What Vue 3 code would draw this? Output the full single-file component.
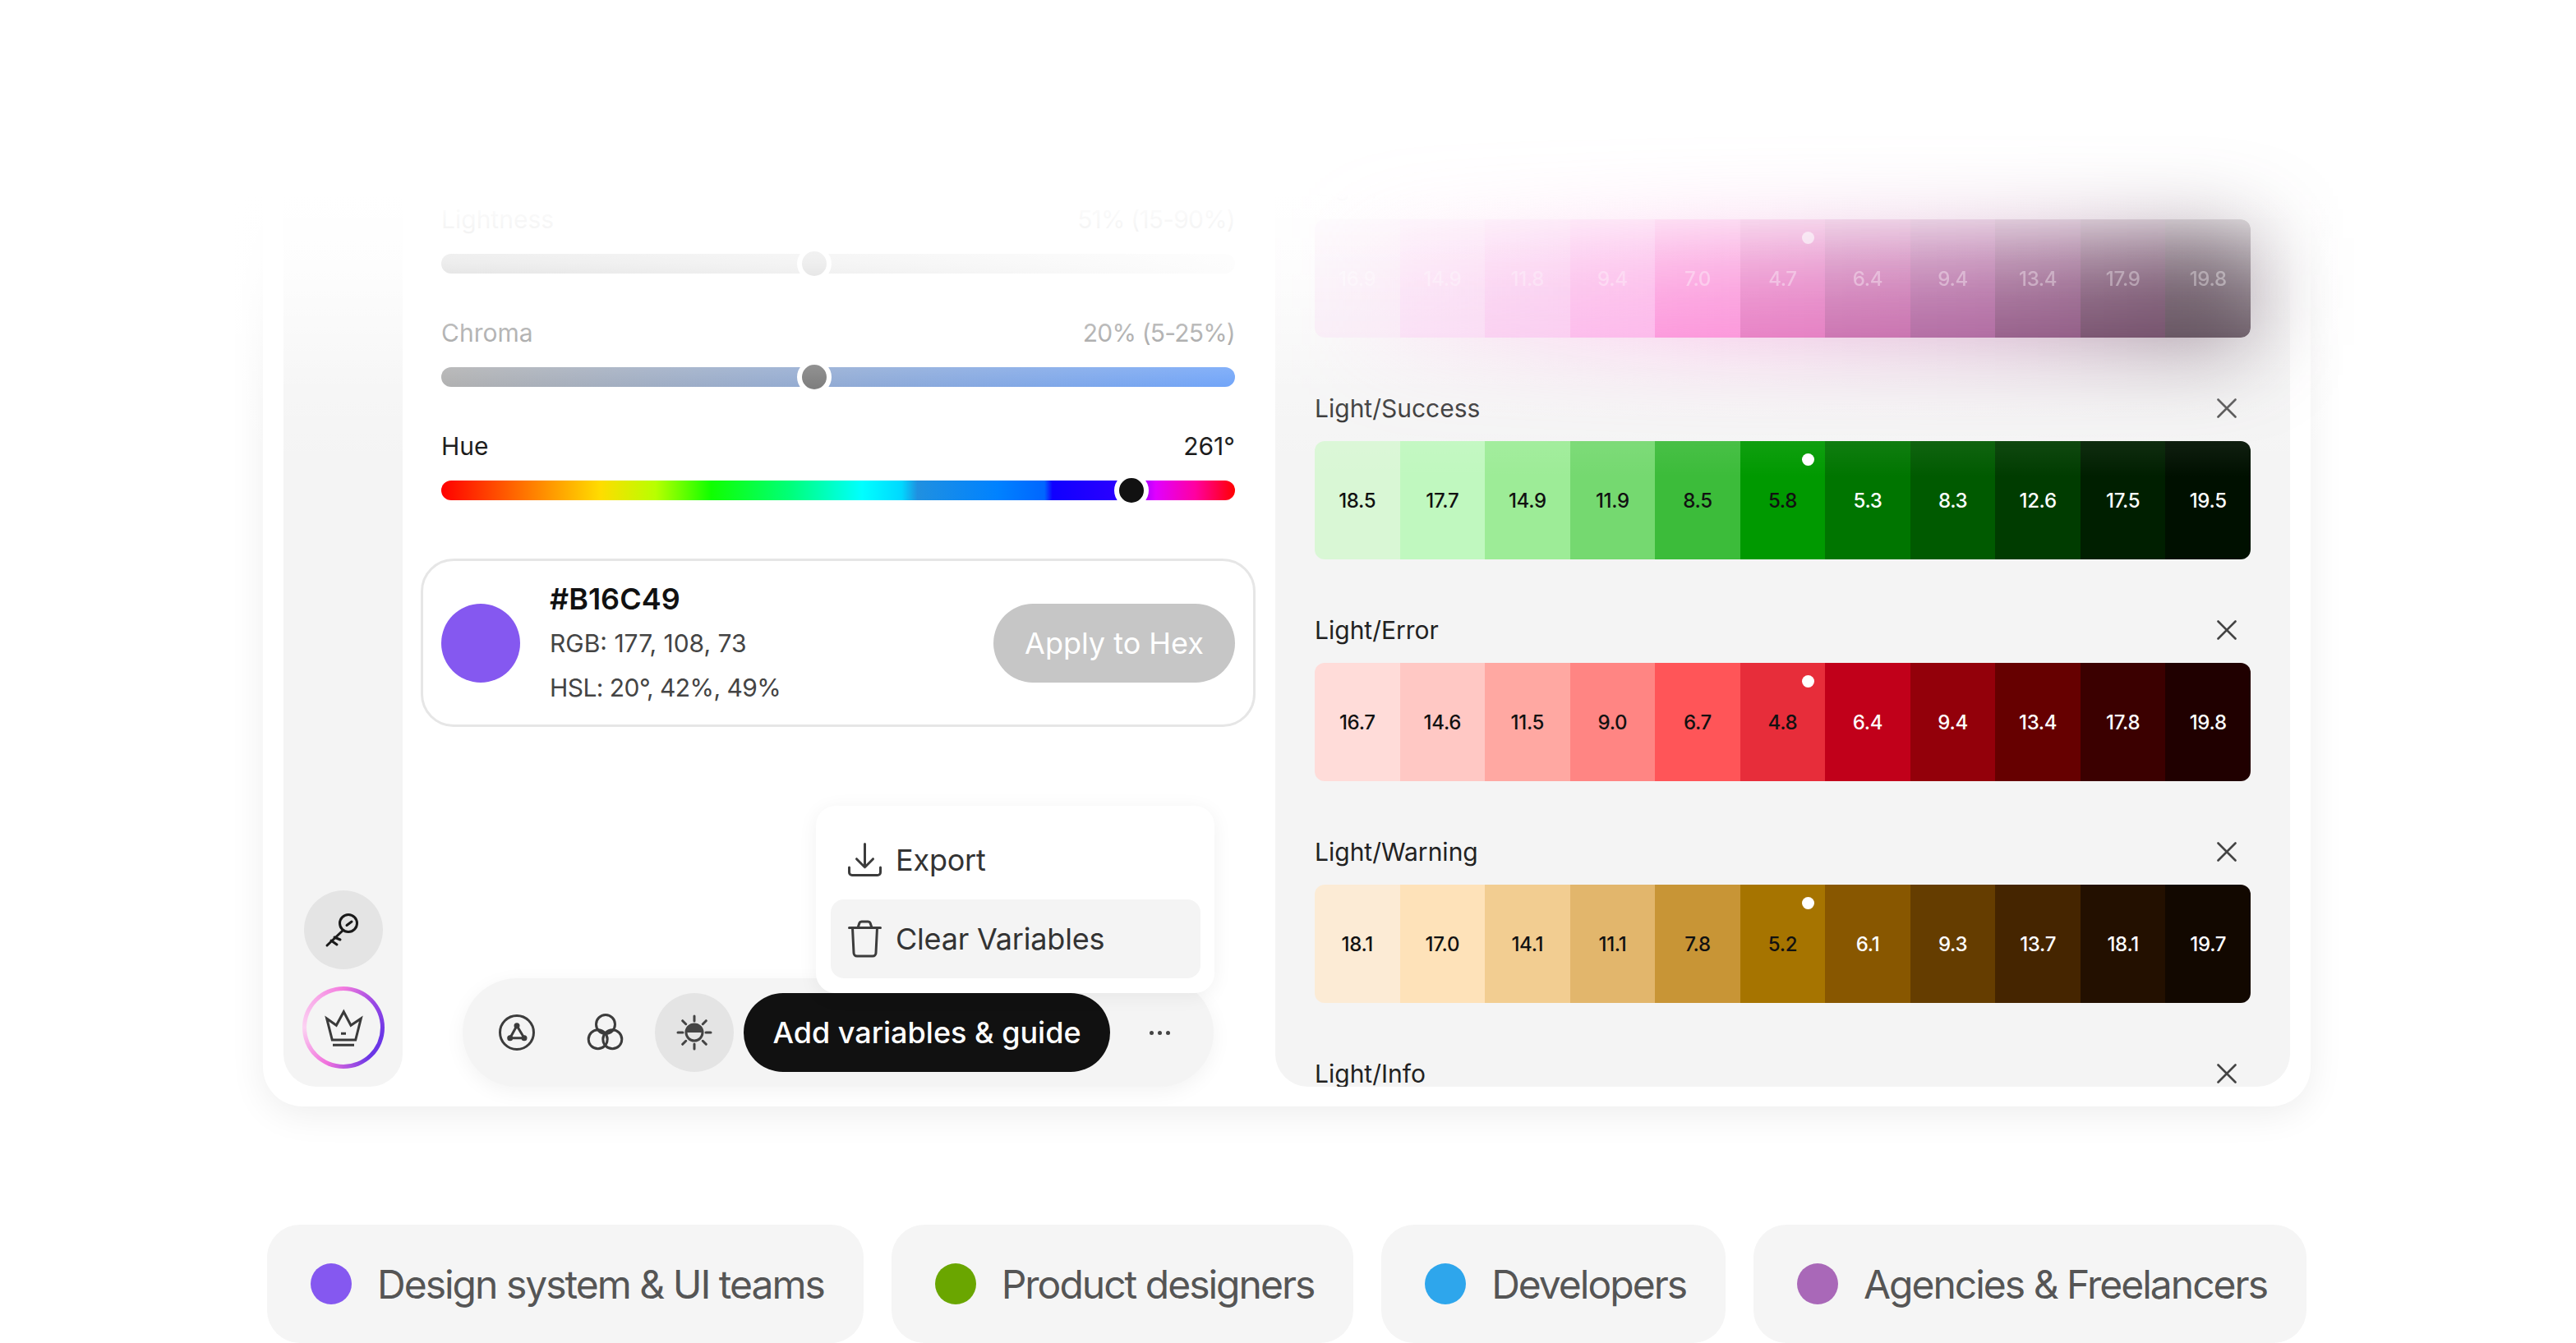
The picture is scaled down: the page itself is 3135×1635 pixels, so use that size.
<script setup>
const sliders = [
  { name: 'Lightness', value: '51% (15-90%)', cls: 'track-l', pos: 47, thumb: '#8a8a8a', tone: 'muted' },
  { name: 'Chroma', value: '20% (5-25%)', cls: 'track-c', pos: 47, thumb: '#5c5c5c', tone: 'muted' },
  { name: 'Hue', value: '261°', cls: 'track-h', pos: 87, thumb: '#111111', tone: 'strong' },
]
const palettes = [
  {
    name: 'Light/Pink', first: true,
    cells: [['16.9','#f9e6f6'],['14.9','#fbd4f5'],['11.8','#fbbdef'],['9.4','#ff9ee6'],['7.0','#ff66cc'],['4.7','#dc3fa6'],['6.4','#b02c88'],['9.4','#8a2274'],['13.4','#5e0f4d'],['17.9','#350028'],['19.8','#1c0616']],
  },
  {
    name: 'Light/Success',
    cells: [['18.5','#d9f7d5'],['17.7','#c0f8bf'],['14.9','#9dec97'],['11.9','#75d970'],['8.5','#3cbc3a'],['5.8','#009900'],['5.3','#007500'],['8.3','#005a00'],['12.6','#003c00'],['17.5','#001f00'],['19.5','#001000']],
  },
  {
    name: 'Light/Error',
    cells: [['16.7','#ffdcd9'],['14.6','#ffc8c4'],['11.5','#ffa8a2'],['9.0','#ff8583'],['6.7','#ff5558'],['4.8','#e72d3a'],['6.4','#c1001a'],['9.4','#93000a'],['13.4','#660000'],['17.8','#3b0000'],['19.8','#200000']],
  },
  {
    name: 'Light/Warning',
    cells: [['18.1','#fcebd5'],['17.0','#fee2b9'],['14.1','#f2cd91'],['11.1','#e2b66c'],['7.8','#c89536'],['5.2','#a67400'],['6.1','#885700'],['9.3','#653d00'],['13.7','#452500'],['18.1','#231000'],['19.7','#120800']],
  },
  { name: 'Light/Info', cells: [] },
]
const audiences = [
  { label: 'Design system & UI teams', color: '#8558f0' },
  { label: 'Product designers', color: '#6aa600' },
  { label: 'Developers', color: '#2ea6ec' },
  { label: 'Agencies & Freelancers', color: '#a968b8' },
]
</script>

<template>
  <div class="page">
    <section class="card">
      <aside class="sidebar">
        <button class="round grey">
          <svg width="48" height="48" viewBox="0 0 48 48" fill="none" stroke="#1a1a1a" stroke-width="3" stroke-linecap="round">
            <circle cx="30" cy="16" r="10.5" />
            <path d="M28 18.5l6-4.5M23 25L4 43M13 33l7 3M9 37l7 5" />
          </svg>
        </button>
        <div class="ring">
          <div class="ring-inner">
            <svg width="48" height="48" viewBox="0 0 48 48" fill="none" stroke="#3a3a3a" stroke-width="3" stroke-linejoin="miter">
              <path d="M3.7 13L15.3 21.3 24.3 4.7 33 21.3 45.3 13 38.7 39H10.3Z" />
              <path d="M11 45.3H37M21 31.3H27" />
            </svg>
          </div>
        </div>
      </aside>

      <main class="editor">
        <div class="sliders">
          <div v-for="s in sliders" :key="s.name" class="slider" :class="s.tone">
            <div class="slider-head">
              <span>{{ s.name }}</span>
              <span class="slider-value">{{ s.value }}</span>
            </div>
            <div class="track" :class="s.cls">
              <span class="thumb" :style="{ left: s.pos + '%', background: s.thumb }"></span>
            </div>
          </div>
        </div>

        <div class="color-card">
          <span class="swatch"></span>
          <div class="color-text">
            <strong>#B16C49</strong>
            <span>RGB: 177, 108, 73</span>
            <span class="hsl">HSL: 20°, 42%, 49%</span>
          </div>
          <button class="apply">Apply to Hex</button>
        </div>

        <div class="toolbar">
          <button class="round">
            <svg width="48" height="48" viewBox="0 0 48 48" fill="none" stroke="#3c3c3c" stroke-width="3">
              <circle cx="24" cy="24" r="20.5" />
              <path d="M24 15.7L15.7 30.7H33Z" />
              <circle cx="24" cy="15.7" r="2" fill="#3c3c3c" />
              <circle cx="15.7" cy="30.7" r="2" fill="#3c3c3c" />
              <circle cx="33" cy="30.7" r="2" fill="#3c3c3c" />
            </svg>
          </button>
          <button class="round">
            <svg width="48" height="48" viewBox="0 0 48 48" fill="none" stroke="#3c3c3c" stroke-width="3">
              <circle cx="24" cy="14" r="11.5" />
              <circle cx="14.7" cy="32.3" r="11.5" />
              <circle cx="32.3" cy="32.3" r="11.5" />
            </svg>
          </button>
          <button class="round grey">
            <svg width="48" height="48" viewBox="0 0 48 48" fill="none" stroke="#444" stroke-width="3" stroke-linecap="round">
              <circle cx="24" cy="24" r="10" />
              <path d="M13 24a11 11 0 0 1 22 0Z" fill="#444" stroke="none" />
              <path d="M24 4v6M24 38v6M4 24h6M38 24h6M9.7 9.7l4 4M34.3 34.3l4 4M38.3 9.7l-4 4M13.7 34.3l-4 4" />
            </svg>
          </button>
          <button class="primary">Add variables &amp; guide</button>
          <button class="round dots"><i></i><i></i><i></i></button>

          <div class="menu">
            <div class="menu-item">
              <svg width="42" height="42" viewBox="0 0 42 42" fill="none" stroke="#3c3c3c" stroke-width="3" stroke-linecap="round" stroke-linejoin="round">
                <path d="M20.5 1.5V29.5M10.5 19.7L20.5 29.7 30.5 19.7" />
                <path d="M1.5 30v6a3.5 3.5 0 0 0 3.5 3.5h31a3.5 3.5 0 0 0 3.5-3.5v-6" />
              </svg>
              <span>Export</span>
            </div>
            <div class="menu-item active">
              <svg width="42" height="46" viewBox="0 0 42 46" fill="none" stroke="#3c3c3c" stroke-width="3" stroke-linecap="round" stroke-linejoin="round">
                <path d="M1.5 9.5H39.5M12 9.5L14 3.5Q14.5 2 16.5 2H24.5Q26.5 2 27 3.5L29 9.5" />
                <path d="M5.5 9.5L7 40a4 4 0 0 0 4 4H30a4 4 0 0 0 4-4L35.5 9.5" />
              </svg>
              <span>Clear Variables</span>
            </div>
          </div>
        </div>
      </main>

      <div class="panel">
        <div v-for="p in palettes" :key="p.name" class="group">
          <div class="group-head">
            <span>{{ p.name }}</span>
            <svg width="24" height="24" viewBox="0 0 24 24" fill="none" stroke="#444" stroke-width="2.6" stroke-linecap="round">
              <path d="M1.5 1.5L22.5 22.5M22.5 1.5L1.5 22.5" />
            </svg>
          </div>
          <div v-if="p.cells.length" class="scale" :class="{ ghost: p.first }">
            <div
              v-for="(c, i) in p.cells"
              :key="i"
              class="cell"
              :class="{ light: i > 5 }"
              :style="{ background: c[1] }"
            >
              <span v-if="i === 5" class="pin"></span>
              {{ c[0] }}
            </div>
          </div>
        </div>
      </div>
    </section>

    <div class="fade"></div>
    <div class="glow"></div>

    <ul class="chips">
      <li v-for="a in audiences" :key="a.label" class="chip">
        <span class="chip-dot" :style="{ background: a.color }"></span>
        {{ a.label }}
      </li>
    </ul>
  </div>
</template>

<style>
html, body { margin: 0; background: #fff; }
</style>

<style scoped>
.page {
  position: relative;
  width: 3135px;
  height: 1635px;
  overflow: hidden;
  padding-top: 120px;
  box-sizing: border-box;
  background: #fff;
  font-family: Inter, "Noto Sans", sans-serif;
  color: #111;
}
button { font-family: inherit; border: 0; padding: 0; cursor: pointer; }

.card {
  display: flex;
  width: 2492px;
  height: 1227px;
  margin-left: 320px;
  padding: 24px 24px 24px 25px;
  box-sizing: border-box;
  background: #fff;
  border-radius: 48px;
  box-shadow: 0 10px 44px rgba(0, 0, 0, 0.07);
}

.sidebar {
  flex: 0 0 145px;
  display: flex;
  flex-direction: column;
  align-items: center;
  justify-content: flex-end;
  gap: 21px;
  padding-bottom: 22px;
  background: #f4f4f4;
  border-radius: 40px;
}
.round {
  flex: 0 0 96px;
  width: 96px;
  height: 96px;
  display: flex;
  align-items: center;
  justify-content: center;
  border-radius: 50%;
  background: transparent;
}
.grey { background: #e4e4e4; }
.ring {
  width: 100px;
  height: 100px;
  padding: 5px;
  box-sizing: border-box;
  border-radius: 50%;
  background: conic-gradient(#f37ade 0deg, #9a48e4 50deg, #6b36e6 100deg, #6b36e6 140deg, #f070dc 205deg, #fcd2f2 270deg, #f8a6e8 320deg, #f37ade 360deg);
}
.ring-inner {
  width: 100%;
  height: 100%;
  display: flex;
  align-items: center;
  justify-content: center;
  border-radius: 50%;
  background: #f4f4f4;
}

.editor {
  flex: 0 0 1062px;
  display: flex;
  flex-direction: column;
  align-items: flex-start;
}
.sliders {
  display: flex;
  flex-direction: column;
  gap: 54px;
  width: 966px;
  margin: 105px 0 0 47px;
}
.slider-head {
  display: flex;
  justify-content: space-between;
  height: 36px;
  margin-bottom: 24px;
  font-size: 30px;
  line-height: 36px;
}
.muted .slider-value { letter-spacing: -0.8px; }
.muted .slider-head { color: #6b6b6b; }
.strong .slider-head { color: #111; }
.track {
  position: relative;
  height: 24px;
  border-radius: 12px;
}
.track-l { background: linear-gradient(90deg, #808080, #f2f2f2); }
.track-c { background: linear-gradient(90deg, #9b9b9b, #4a8cf7); }
.track-h {
  background: linear-gradient(90deg, #ff0000 0%, #ff7a00 11%, #ffdc00 20%, #b8ff00 27%, #10ff00 34%, #00ff7a 44%, #00ffff 53%, #00d8ff 58%, #2090e0 60%, #0082ff 70%, #0066ff 76%, #1000ff 77%, #2a00ff 85%, #e000ff 90%, #ff00a0 95%, #ff0000 100%);
}
.thumb {
  position: absolute;
  top: 50%;
  width: 42px;
  height: 42px;
  box-sizing: border-box;
  border: 6px solid #fff;
  border-radius: 50%;
  transform: translate(-50%, -50%);
}

.color-card {
  display: flex;
  align-items: center;
  width: 1016px;
  height: 205px;
  margin: 71px 0 0 22px;
  padding: 0 22px;
  box-sizing: border-box;
  border: 3px solid #e6e6e6;
  border-radius: 40px;
}
.swatch {
  flex: 0 0 96px;
  height: 96px;
  margin-right: 36px;
  border-radius: 50%;
  background: #8558f0;
}
.color-text {
  flex: 1;
  display: flex;
  flex-direction: column;
  font-size: 30px;
  line-height: 54px;
  color: #444;
}
.color-text .hsl { letter-spacing: -0.55px; }
.color-text strong {
  font-size: 36px;
  font-weight: 600;
  color: #111;
}
.apply {
  flex: 0 0 294px;
  height: 96px;
  border-radius: 48px;
  background: #c6c6c6;
  color: #fff;
  font-size: 36px;
  line-height: 96px;
}

.toolbar {
  position: relative;
  display: flex;
  gap: 12px;
  align-items: center;
  margin: auto 0 0 73px;
  padding: 18px;
  background: #f4f4f4;
  border-radius: 66px;
  box-shadow: 0 6px 24px rgba(0, 0, 0, 0.05);
}
.primary {
  flex: 0 0 446px;
  height: 96px;
  border-radius: 48px;
  background: #111;
  color: #fff;
  font-size: 36px;
  font-weight: 500;
}
.dots { gap: 5px; }
.dots i {
  width: 5px;
  height: 5px;
  border-radius: 50%;
  background: #444;
}
.menu {
  position: absolute;
  left: 430px;
  bottom: 114px;
  width: 485px;
  padding: 18px 17px 18px 18px;
  box-sizing: border-box;
  background: #fff;
  border-radius: 24px;
  box-shadow: 0 4px 24px rgba(0, 0, 0, 0.06);
}
.menu-item {
  display: flex;
  align-items: center;
  gap: 16px;
  height: 96px;
  padding-left: 21px;
  border-radius: 16px;
  font-size: 36px;
  letter-spacing: -0.2px;
  color: #333;
}
.active { background: #f4f4f4; }

.panel {
  flex: 0 0 1235px;
  display: flex;
  flex-direction: column;
  gap: 62px;
  height: 1179px;
  padding: 59px 48px 0;
  box-sizing: border-box;
  overflow: hidden;
  background: #f4f4f4;
  border-radius: 40px;
}
.group { flex: 0 0 auto; }
.group-head {
  display: flex;
  align-items: center;
  justify-content: space-between;
  height: 48px;
  margin-bottom: 16px;
  padding-right: 17px;
  font-size: 30px;
  color: #222;
}
.scale {
  display: grid;
  grid-template-columns: repeat(11, 1fr);
  height: 144px;
  overflow: hidden;
  border-radius: 12px;
}
.ghost {
  position: relative;
  z-index: 4;
  -webkit-mask-image: linear-gradient(180deg, rgba(0,0,0,.12), rgba(0,0,0,.56));
  mask-image: linear-gradient(180deg, rgba(0,0,0,.12), rgba(0,0,0,.56));
}
.cell {
  position: relative;
  display: flex;
  align-items: center;
  justify-content: center;
  font-size: 24px;
  font-weight: 500;
  letter-spacing: -0.3px;
  color: #111;
}
.light { color: #fff; }
.ghost .cell { color: rgba(255, 255, 255, 0.55); }
.pin {
  position: absolute;
  top: 15px;
  right: 13px;
  width: 15px;
  height: 15px;
  border-radius: 50%;
  background: #fff;
}

.fade {
  position: absolute;
  left: 0;
  right: 0;
  top: 0;
  height: 580px;
  z-index: 2;
  pointer-events: none;
  background: linear-gradient(180deg,
    #fff 0,
    #fff 236px,
    rgba(255,255,255,.95) 268px,
    rgba(255,255,255,.86) 320px,
    rgba(255,255,255,.5) 406px,
    rgba(255,255,255,.22) 470px,
    rgba(255,255,255,.06) 540px,
    rgba(255,255,255,0) 580px);
}
.glow {
  position: absolute;
  left: 1660px;
  top: 290px;
  width: 1080px;
  height: 130px;
  z-index: 3;
  pointer-events: none;
  filter: blur(55px);
  background: linear-gradient(90deg, rgba(255,170,230,.12), rgba(250,130,215,.42) 40%, rgba(175,95,155,.48) 72%, rgba(50,30,45,.52));
}

.chips {
  display: flex;
  justify-content: space-between;
  width: 2482px;
  margin: 144px 0 0 325px;
  padding: 0;
  list-style: none;
}
.chip {
  display: flex;
  align-items: center;
  gap: 31px;
  height: 144px;
  padding: 0 48px 0 53px;
  border-radius: 40px;
  background: #f5f5f5;
  font-size: 48px;
  letter-spacing: -2px;
  white-space: nowrap;
  color: #555;
}
.chip-dot {
  flex: 0 0 50px;
  height: 50px;
  border-radius: 50%;
}
</style>
